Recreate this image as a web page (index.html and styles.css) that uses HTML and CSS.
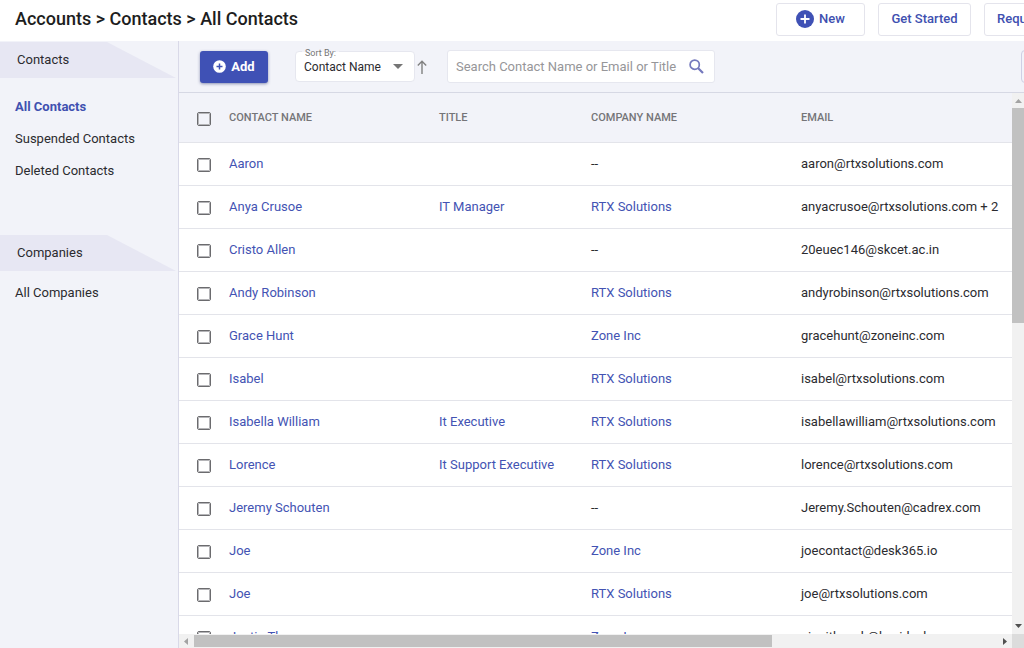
FILE: index.html
```html
<!DOCTYPE html>
<html lang="en">
<head>
<meta charset="utf-8">
<title>All Contacts</title>
<link rel="stylesheet" href="styles.css">
</head>
<body>
<header class="topbar">
  <h1 class="crumbs">Accounts &gt; Contacts &gt; All Contacts</h1>
  <div class="top-actions">
    <button class="btn-outline btn-new" type="button"><svg width="18" height="18" viewBox="0 0 18 18" aria-hidden="true"><circle cx="9" cy="9" r="9" fill="#3f51b5"/><path d="M9 4.500v9M4.500 9h9" stroke="#fff" stroke-width="1.800"/></svg>New</button>
    <button class="btn-outline" type="button">Get Started</button>
    <button class="btn-outline btn-demo" type="button">Request Demo</button>
  </div>
</header>
<div class="layout">
  <nav class="sidebar" aria-label="Accounts">
    <h2 class="side-head"><svg class="side-shape" viewBox="0 0 178 36" preserveAspectRatio="none" aria-hidden="true"><path d="M0 0H107L176 36H0z" fill="#e7e7f3"/></svg><span>Contacts</span></h2>
    <ul class="side-list">
      <li><a class="active" href="#all">All Contacts</a></li>
      <li><a href="#suspended">Suspended Contacts</a></li>
      <li><a href="#deleted">Deleted Contacts</a></li>
    </ul>
    <h2 class="side-head"><svg class="side-shape" viewBox="0 0 178 36" preserveAspectRatio="none" aria-hidden="true"><path d="M0 0H107L176 36H0z" fill="#e7e7f3"/></svg><span>Companies</span></h2>
    <ul class="side-list companies">
      <li><a href="#companies">All Companies</a></li>
    </ul>
  </nav>
  <main class="content">
    <div class="toolbar">
      <button class="btn-add" type="button"><svg width="13" height="13" viewBox="0 0 13 13" aria-hidden="true"><circle cx="6.500" cy="6.500" r="6.300" fill="#fff"/><path d="M6.500 3.500v6M3.500 6.500h6" stroke="#3f51b5" stroke-width="1.500"/></svg>Add</button>
      <div class="sort">
        <label class="sort-label" for="sort">Sort By:</label>
        <select class="sort-select" id="sort"><option>Contact Name</option><option>Company Name</option></select>
        <svg class="caret" width="10" height="5" viewBox="0 0 10 5" aria-hidden="true"><path d="M0 0h10L5 5z" fill="#757575"/></svg>
      </div>
      <button class="btn-dir" type="button" aria-label="Sort ascending"><svg width="10" height="14" viewBox="0 0 10 14" aria-hidden="true"><path d="M5 14V1.500M.8 5.500L5 1.300l4.200 4.200" fill="none" stroke="#808080" stroke-width="1.400"/></svg></button>
      <div class="search">
        <input class="search-input" type="text" aria-label="Search contacts" placeholder="Search Contact Name or Email or Title">
        <svg width="15" height="15" viewBox="0 0 15 15" aria-hidden="true"><circle cx="5.700" cy="5.700" r="4.600" fill="none" stroke="#7478bd" stroke-width="1.700"/><path d="M9 9l5 5" stroke="#7478bd" stroke-width="2.200"/></svg>
      </div>
      <button class="btn-more" type="button" aria-label="More"></button>
    </div>
    <div class="pane">
      <div class="viewport">
        <table class="contacts">
          <colgroup><col class="c-check"><col class="c-name"><col class="c-title"><col class="c-company"><col></colgroup>
          <thead><tr><th><input type="checkbox" aria-label="Select all"></th><th>CONTACT NAME</th><th>TITLE</th><th>COMPANY NAME</th><th>EMAIL</th></tr></thead>
          <tbody>
            <tr><td><input type="checkbox" aria-label="Aaron"></td><td><a href="#c">Aaron</a></td><td></td><td>--</td><td>aaron@rtxsolutions.com</td></tr>
            <tr><td><input type="checkbox" aria-label="Anya Crusoe"></td><td><a href="#c">Anya Crusoe</a></td><td><a href="#c">IT Manager</a></td><td><a href="#c">RTX Solutions</a></td><td>anyacrusoe@rtxsolutions.com + 2</td></tr>
            <tr><td><input type="checkbox" aria-label="Cristo Allen"></td><td><a href="#c">Cristo Allen</a></td><td></td><td>--</td><td>20euec146@skcet.ac.in</td></tr>
            <tr><td><input type="checkbox" aria-label="Andy Robinson"></td><td><a href="#c">Andy Robinson</a></td><td></td><td><a href="#c">RTX Solutions</a></td><td>andyrobinson@rtxsolutions.com</td></tr>
            <tr><td><input type="checkbox" aria-label="Grace Hunt"></td><td><a href="#c">Grace Hunt</a></td><td></td><td><a href="#c">Zone Inc</a></td><td>gracehunt@zoneinc.com</td></tr>
            <tr><td><input type="checkbox" aria-label="Isabel"></td><td><a href="#c">Isabel</a></td><td></td><td><a href="#c">RTX Solutions</a></td><td>isabel@rtxsolutions.com</td></tr>
            <tr><td><input type="checkbox" aria-label="Isabella William"></td><td><a href="#c">Isabella William</a></td><td><a href="#c">It Executive</a></td><td><a href="#c">RTX Solutions</a></td><td>isabellawilliam@rtxsolutions.com</td></tr>
            <tr><td><input type="checkbox" aria-label="Lorence"></td><td><a href="#c">Lorence</a></td><td><a href="#c">It Support Executive</a></td><td><a href="#c">RTX Solutions</a></td><td>lorence@rtxsolutions.com</td></tr>
            <tr><td><input type="checkbox" aria-label="Jeremy Schouten"></td><td><a href="#c">Jeremy Schouten</a></td><td></td><td>--</td><td>Jeremy.Schouten@cadrex.com</td></tr>
            <tr><td><input type="checkbox" aria-label="Joe"></td><td><a href="#c">Joe</a></td><td></td><td><a href="#c">Zone Inc</a></td><td>joecontact@desk365.io</td></tr>
            <tr><td><input type="checkbox" aria-label="Joe"></td><td><a href="#c">Joe</a></td><td></td><td><a href="#c">RTX Solutions</a></td><td>joe@rtxsolutions.com</td></tr>
            <tr><td><input type="checkbox" aria-label="Justin Th"></td><td><a href="#c">Justin Th</a></td><td></td><td><a href="#c">Zone Inc</a></td><td>airwithyouk@kovidesk</td></tr>
          </tbody>
        </table>
      </div>
      <div class="vbar" aria-hidden="true">
        <svg width="7" height="4" viewBox="0 0 7 4"><path d="M0 4h7L3.500 0z" fill="#a3a3a3"/></svg>
        <div class="vtrack"><div class="vthumb"></div></div>
        <svg width="7" height="4" viewBox="0 0 7 4"><path d="M0 0h7L3.500 4z" fill="#505050"/></svg>
      </div>
      <div class="hbar" aria-hidden="true">
        <svg width="4" height="7" viewBox="0 0 4 7"><path d="M4 0v7L0 3.500z" fill="#a3a3a3"/></svg>
        <div class="htrack"><div class="hthumb"></div></div>
        <svg width="4" height="7" viewBox="0 0 4 7"><path d="M0 0v7L4 3.500z" fill="#505050"/></svg>
      </div>
      <div class="corner"></div>
    </div>
  </main>
</div>
</body>
</html>
```
FILE: styles.css
```css
* { box-sizing: border-box; }
body {
  margin: 0;
  height: 100vh;
  display: flex;
  flex-direction: column;
  overflow: hidden;
  background: #fff;
  color: #2b2b2f;
  font: 13px/20px Roboto, sans-serif;
}
h1, h2, ul { margin: 0; padding: 0; font-weight: 400; list-style: none; }
a { color: #4353b3; text-decoration: none; }
button, input, select { font: inherit; }
svg { flex: none; }

.topbar {
  flex: none;
  height: 41px;
  display: flex;
  align-items: center;
  justify-content: space-between;
  padding: 0 0 3px 15px;
  overflow: hidden;
}
.crumbs { font-size: 18px; font-weight: 500; color: #1d1d20; white-space: nowrap; }
.top-actions { display: flex; gap: 13px; margin-right: -76px; flex: none; }
.btn-outline {
  display: flex;
  align-items: center;
  justify-content: center;
  gap: 5px;
  min-width: 93px;
  height: 33px;
  padding: 0 12px;
  border: 1px solid #e4e4ec;
  border-radius: 3px;
  background: #fff;
  color: #4050b0;
  font-weight: 500;
  white-space: nowrap;
}
.btn-new { min-width: 89px; }
.btn-demo { width: 116px; justify-content: flex-start; }

.layout {
  flex: 1;
  min-height: 0;
  display: grid;
  grid-template-columns: 179px minmax(0, 1fr);
  grid-template-rows: minmax(0, 1fr);
}
.sidebar { background: #f2f3f9; border-right: 1px solid #d9d9e8; padding-top: 1px; }
.side-head { display: grid; align-items: center; height: 36px; font-size: 13px; }
.side-head span, .side-shape { grid-area: 1 / 1; }
.side-head span { padding-left: 17px; z-index: 1; }
.side-shape { width: 100%; height: 100%; display: block; }
.side-list { padding: 13px 15px 48px; }
.side-list li { line-height: 32px; }
.side-list a { color: #2b2b2f; display: block; }
.side-list a.active { color: #4050b0; font-weight: 700; }
.companies { padding-top: 6px; }

.content { display: flex; flex-direction: column; min-width: 0; min-height: 0; overflow: hidden; }
.toolbar {
  flex: none;
  display: flex;
  align-items: center;
  height: 52px;
  padding-left: 21px;
  background: #f2f3f9;
  border-bottom: 1px solid #d6d8e4;
}
.btn-add {
  display: flex;
  align-items: center;
  justify-content: center;
  gap: 5px;
  width: 68px;
  height: 32px;
  border: 0;
  border-radius: 3px;
  background: #3f51b5;
  color: #fff;
  font-weight: 700;
  box-shadow: 0 1px 3px rgba(40, 50, 110, .5);
}
.sort { position: relative; width: 120px; height: 31px; margin-left: 27px; }
.sort-label {
  position: absolute;
  left: 7px;
  top: -3px;
  padding: 0 3px;
  background: linear-gradient(#f2f3f9 40%, #fff 40%);
  color: #757575;
  font-size: 9px;
  line-height: 10px;
}
.sort-select {
  appearance: none;
  width: 100%;
  height: 100%;
  padding: 0 8px;
  border: 1px solid #e6e7ef;
  border-radius: 4px;
  background: #fff;
  color: #2b2b2f;
  font-size: 12px;
}
.caret { position: absolute; right: 12px; top: 13px; pointer-events: none; }
.btn-dir { display: flex; margin-left: 2px; padding: 0; border: 0; background: none; }
.search {
  display: flex;
  align-items: center;
  width: 268px;
  height: 33px;
  margin-left: 20px;
  padding: 0 10px 0 8px;
  border: 1px solid #e6e7ef;
  border-radius: 3px;
  background: #fff;
}
.search-input { flex: 1; min-width: 0; padding: 0; border: 0; outline: 0; background: none; }
.search-input::placeholder { color: #969699; opacity: 1; }
.btn-more {
  flex: none;
  width: 33px;
  height: 33px;
  margin: 0 -30px 0 auto;
  border: 1px solid #cfcfe4;
  border-radius: 4px;
  background: #f2f3f9;
}

.pane {
  flex: 1;
  min-height: 0;
  display: grid;
  grid-template-columns: minmax(0, 1fr) 12px;
  grid-template-rows: minmax(0, 1fr) 14px;
}
.viewport { overflow: hidden; }
.contacts { width: 100%; table-layout: fixed; border-collapse: separate; border-spacing: 0; }
.c-check { width: 50px; }
.c-name, .c-company { width: 210px; }
.c-title { width: 152px; }
.contacts th, .contacts td { padding: 0; text-align: left; white-space: nowrap; border-bottom: 1px solid #e3e4ea; }
.contacts th { height: 50px; background: #f2f3f9; color: #757578; font-size: 11px; font-weight: 500; }
.contacts td { height: 43px; }
.contacts input {
  appearance: none;
  display: block;
  width: 14px;
  height: 14px;
  margin: 2px 0 0 18px;
  border: 1px solid #6b6b6e;
  outline: 1px solid #b5b5b8;
  outline-offset: -2px;
  border-radius: 2px;
}

.vbar, .hbar { display: flex; align-items: center; background: #f1f1f1; }
.vbar { flex-direction: column; padding: 6px 0; gap: 5px; }
.vtrack { flex: 1; width: 100%; }
.vthumb { width: 100%; height: 42%; background: #c1c1c1; }
.hbar { padding: 0 5px; gap: 6px; }
.htrack { flex: 1; height: 12px; }
.hthumb { width: 72%; height: 100%; background: #c1c1c1; }
.corner { background: #dcdcdc; }
```
